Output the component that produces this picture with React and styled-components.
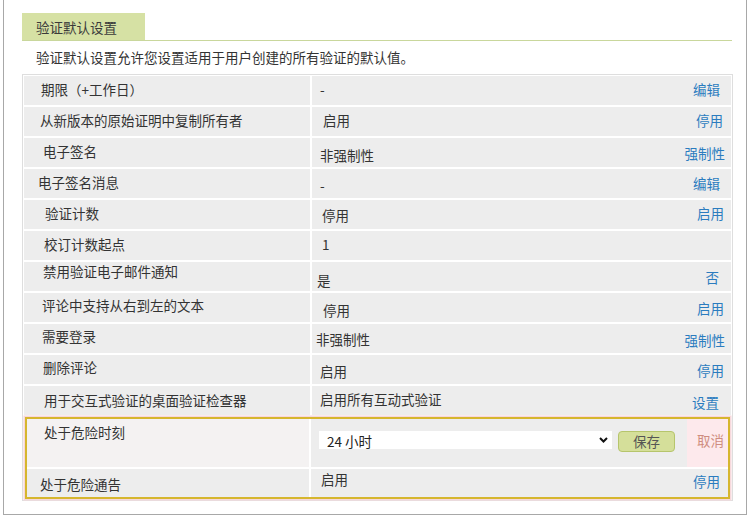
import React from 'react'
import styled, { createGlobalStyle } from 'styled-components'

const Global = createGlobalStyle`
    *, *::before, *::after {
        box-sizing: border-box;
    }
    body {
        margin: 0;
        background: #fff;
        font-family: "Noto Sans CJK SC", "Noto Sans", sans-serif;
        font-size: 13.5px;
        color: #333;
    }
`

const Frame = styled.div`
    width: 744px;
    margin-left: 3px;
    padding: 13px 13px 13px 18px;
    border: 1px solid #a8a8a8;
    border-top: none;
`

const TabBar = styled.div`
    display: flex;
    width: 710px;
    border-bottom: 1px solid #c9d79c;
`

const Tab = styled.div`
    width: 123px;
    height: 27px;
    padding-left: 14px;
    display: flex;
    align-items: center;
    background: #d6e1a4;
    color: #3a3a3a;
`

const Description = styled.p`
    margin: 6px 0 7px 14px;
    line-height: 20px;
    color: #333;
`

const Table = styled.div`
    width: 711px;
    padding: 1px;
    border: 1px solid #dedede;
    background: #fff;
    display: flex;
    flex-direction: column;
    gap: 2px;
`

const Row = styled.div`
    display: grid;
    grid-template-columns: ${p => p.$left || 286}px 1fr;
    column-gap: 2px;
    height: ${p => p.$h || 29}px;
`

const Cell = styled.div`
    display: flex;
    align-items: ${p => (p.$top ? 'flex-start' : 'center')};
    min-height: 0;
    overflow: hidden;
    background: ${p => p.$bg || '#ededed'};
    padding-left: ${p => p.$pl || 0}px;
    padding-top: ${p => Math.max(0, (p.$dy || 0) * 2) + (p.$pt || 0)}px;
    padding-bottom: ${p => Math.max(0, -(p.$dy || 0) * 2) + 3}px;
    line-height: 16px;
    white-space: nowrap;
`

const ValueCell = styled(Cell)`
    justify-content: space-between;
    padding-right: ${p => p.$pr || 8}px;
`

const Value = styled.span`
    color: #333;
`

const Link = styled.a`
    color: #2b7cbf;
    cursor: pointer;
    align-self: center;
    padding-top: ${p => Math.max(0, (p.$dy || 0) * 2)}px;
    padding-bottom: ${p => Math.max(0, -(p.$dy || 0) * 2)}px;
`

const Highlight = styled.div`
    margin: 0 1px;
    border: 2px solid #d6b62e;
    box-shadow: 0 0 0 1.5px #f6d8dc;
    display: flex;
    flex-direction: column;
    gap: 2px;
`

const EditCell = styled.div`
    display: flex;
    align-items: flex-start;
    background: #ededed;
    padding-left: 8px;
`

const SelectWrap = styled.div`
    position: relative;
    margin-top: 12px;
    width: 293px;
    height: 18px;
`

const Select = styled.select`
    appearance: none;
    width: 100%;
    height: 18px;
    padding: 0 0 0 8px;
    border: none;
    background: #fff;
    font-family: inherit;
    font-size: 13.5px;
    color: #222;
    outline: none;
`

const Chevron = styled.svg`
    position: absolute;
    right: 4px;
    top: 6px;
    pointer-events: none;
`

const SaveButton = styled.button`
    margin: 12px 0 0 6px;
    width: 57px;
    height: 21px;
    padding: 0;
    border: 1px solid #b6c56c;
    border-radius: 4px;
    background: #d5df9a;
    font-family: inherit;
    font-size: 13.5px;
    line-height: 19px;
    color: #555;
`

const CancelCell = styled.div`
    margin-left: auto;
    align-self: stretch;
    width: 41px;
    padding: 11px 0 0 10px;
    background: #fde9ec;
    line-height: 20px;
    color: #cf8d7f;
    cursor: pointer;
`

const rows = [
    { label: '期限（+工作日）', pl: 17, value: '-', vl: 8, link: '编辑', pr: 11 },
    { label: '从新版本的原始证明中复制所有者', pl: 16, value: '启用', vl: 11, link: '停用', pr: 8 },
    { label: '电子签名', pl: 19, value: '非强制性', vl: 8, vdy: 4, link: '强制性', kdy: 2, pr: 6 },
    { label: '电子签名消息', pl: 14, value: '-', vl: 8, vdy: 3, link: '编辑', kdy: 1, pr: 11 },
    { label: '验证计数', pl: 21, value: '停用', vl: 10, vdy: 2, link: '启用', pr: 7 },
    { label: '校订计数起点', pl: 20, value: '1', vl: 10 },
    { label: '禁用验证电子邮件通知', pl: 19, ldy: -4, value: '是', vl: 5, vdy: 5, link: '否', kdy: 2, pr: 12 },
    { label: '评论中支持从右到左的文本', pl: 18, ldy: -1, value: '停用', vl: 11, vdy: 4, link: '启用', kdy: 2, pr: 7 },
    { label: '需要登录', pl: 18, ldy: -1, value: '非强制性', vl: 4, vdy: 2, link: '强制性', kdy: 3, pr: 6 },
    { label: '删除评论', pl: 19, ldy: -1, value: '启用', vl: 8, vdy: 3, link: '停用', kdy: 2, pr: 7 },
    { label: '用于交互式验证的桌面验证检查器', pl: 20, ldy: 1, value: '启用所有互动式验证', vl: 8, link: '设置', kdy: 3, pr: 12 },
]

const SettingRow = ({ r, left, h, leftBg }) => (
    <Row $left={left} $h={h}>
        <Cell $pl={r.pl} $dy={r.ldy} $bg={leftBg}>{r.label}</Cell>
        <ValueCell $pl={r.vl} $pr={r.pr}>
            <Value style={{ paddingTop: Math.max(0, (r.vdy || 0) * 2), paddingBottom: Math.max(0, -(r.vdy || 0) * 2) }}>{r.value}</Value>
            {r.link && <Link $dy={r.kdy}>{r.link}</Link>}
        </ValueCell>
    </Row>
)

const App = () => {
    return (
        <>
            <Global />
            <Frame>
                <TabBar>
                    <Tab>验证默认设置</Tab>
                </TabBar>
                <Description>验证默认设置允许您设置适用于用户创建的所有验证的默认值。</Description>
                <Table>
                    {rows.map(r => (
                        <SettingRow key={r.label} r={r} />
                    ))}
                    <Highlight>
                        <Row $left={282} $h={48}>
                            <Cell $top $pl={17} $pt={5} $bg="#f4f2f2">处于危险时刻</Cell>
                            <EditCell>
                                <SelectWrap>
                                    <Select defaultValue="24">
                                        <option value="24">24 小时</option>
                                        <option value="48">48 小时</option>
                                    </Select>
                                    <Chevron width="9" height="6" viewBox="0 0 9 6">
                                        <path d="M1 1 L4.5 4.5 L8 1" fill="none" stroke="#111" strokeWidth="2" />
                                    </Chevron>
                                </SelectWrap>
                                <SaveButton>保存</SaveButton>
                                <CancelCell>取消</CancelCell>
                            </EditCell>
                        </Row>
                        <SettingRow
                            left={282}
                            h={28}
                            r={{ label: '处于危险通告', pl: 13, ldy: 2, value: '启用', vl: 10, vdy: -3, link: '停用', kdy: -1, pr: 8 }}
                        />
                    </Highlight>
                </Table>
            </Frame>
        </>
    )
}

export default App
